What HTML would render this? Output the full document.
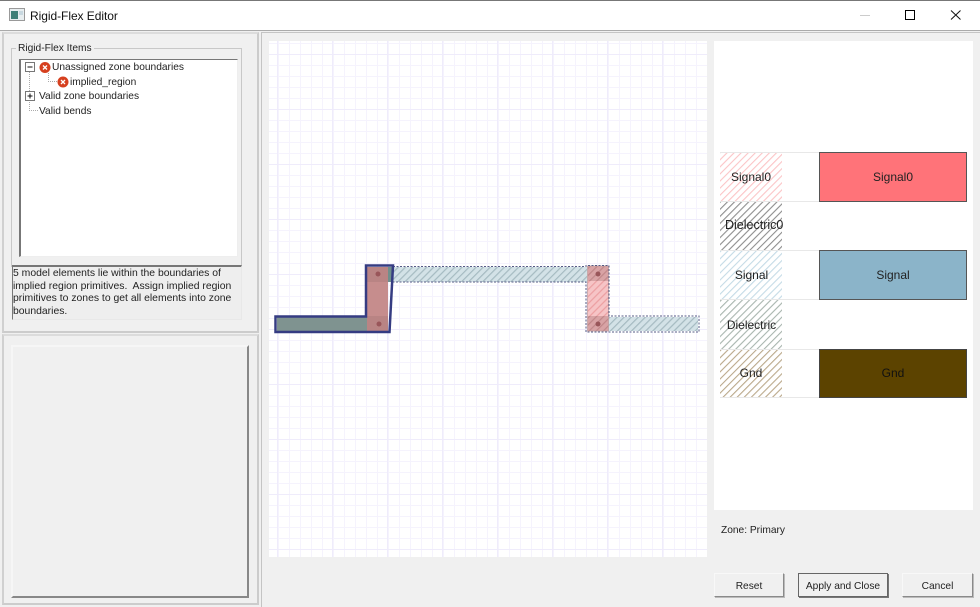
<!DOCTYPE html>
<html><head><meta charset="utf-8"><style>
html,body{margin:0;padding:0;width:980px;height:607px;overflow:hidden;background:#f0f0f0;font-family:"Liberation Sans",sans-serif;color:#222}
div{position:absolute;box-sizing:border-box}
.t{font-size:10.2px;white-space:nowrap;line-height:14px}
.l{font-size:12px;text-align:center;color:#222}
.btn{height:24px;top:573px;background:#f0f0f0;border:1px solid;border-color:#f8f8f8 #8a8a8a #8a8a8a #f8f8f8;box-shadow:1px 1px 0 #bbb;text-align:center;font-size:10.200px;line-height:25px}
</style></head><body>
<div style="left:0;top:0;width:980px;height:31px;background:#fff;border-top:1px solid #777;border-bottom:1px solid #aaa"></div>
<svg style="position:absolute;left:9px;top:8px" width="16" height="14"><rect x=".5" y=".5" width="15" height="12" fill="#e8eef0" stroke="#999"/><rect x="2" y="3" width="7" height="8" fill="#3f7f78"/><rect x="10" y="3" width="4" height="4" fill="#c8d8e0"/></svg>
<div style="left:30px;top:8px;font-size:12px;line-height:16px;color:#111;white-space:nowrap;letter-spacing:-.05px">Rigid-Flex Editor</div>
<svg style="position:absolute;left:855px;top:8px" width="125" height="16" fill="none"><path d="M5 7.500H15" stroke="#ccc"/><rect x="50.500" y="2.500" width="9" height="9" stroke="#000" stroke-width="1"/><path d="M96 2.500L105.500 11.500M105.500 2.500L96 11.500" stroke="#111" stroke-width="1"/></svg>

<!-- left panels -->
<div style="left:2px;top:32px;width:257px;height:301px;border:2px solid;border-color:#dcdcdc #cccccc #cccccc #d0d0d0"></div>
<div style="left:2px;top:334px;width:257px;height:271px;border:2px solid;border-color:#dcdcdc #cccccc #cccccc #d0d0d0"></div>
<div style="left:11px;top:48px;width:231px;height:219px;border:1px solid #c8c8c8"></div>
<div style="left:16px;top:42px;background:#f0f0f0;padding:0 2px;font-size:10.200px;line-height:14px;white-space:nowrap">Rigid-Flex Items</div>
<div style="left:19px;top:59px;width:219px;height:198px;background:#fff;border:1px solid;border-color:#777 #eee #eee #777;border-left-width:2px"></div>
<svg style="position:absolute;left:20px;top:60px" width="130" height="60" fill="none">
<path d="M9.500 12V50.500H19M28.500 13V21.500H38" stroke="#aaa" stroke-dasharray="1 1"/>
<rect x="5.500" y="2.500" width="9" height="9" fill="#fff" stroke="#777"/><path d="M7.500 7H12.500" stroke="#111"/>
<rect x="5.500" y="31.500" width="9" height="9" fill="#fff" stroke="#777"/><path d="M7.500 36H12.500M10 33.500V38.500" stroke="#111"/>
<circle cx="25" cy="7.500" r="5.500" fill="#d6401f"/><path d="M23 5.500L27 9.500M27 5.500L23 9.500" stroke="#fff" stroke-width="1.300"/>
<circle cx="43" cy="22" r="5.500" fill="#d6401f"/><path d="M41 20L45 24M45 20L41 24" stroke="#fff" stroke-width="1.300"/>
</svg>
<div class="t" style="left:52px;top:61px">Unassigned zone boundaries</div>
<div class="t" style="left:70px;top:76px">implied_region</div>
<div class="t" style="left:39px;top:90px">Valid zone boundaries</div>
<div class="t" style="left:39px;top:105px">Valid bends</div>
<div style="left:12px;top:265px;width:230px;height:55px;background:#eee;border-top:2px solid #777;border-left:1px solid #777;border-right:1px solid #e8e8e8;border-bottom:1px solid #e8e8e8"></div>
<div class="t" style="left:13px;top:268px;line-height:12.700px;font-size:10.400px">5 model elements lie within the boundaries of<br>implied region primitives.&nbsp; Assign implied region<br>primitives to zones to get all elements into zone<br>boundaries.</div>
<div style="left:11px;top:345px;width:238px;height:253px;border:2px solid;border-color:#f6f6f6 #888 #888 #f6f6f6"></div>

<!-- right area -->
<div style="left:261px;top:32px;width:719px;height:575px;border:1px solid #c4c4c4;border-right:0;border-bottom:0"></div>

<svg style="position:absolute;left:269px;top:41px" width="438" height="516">
<defs>
<pattern id="m" width="11" height="11" patternUnits="userSpaceOnUse" x="-2" y="2"><path d="M.5 0V11M0 .5H11" stroke="#f5f3fd" fill="none" stroke-width="1"/></pattern>
<pattern id="M" width="55" height="55" patternUnits="userSpaceOnUse" x="8" y="13"><path d="M.5 0V55M0 .5H55" stroke="#efecfb" fill="none"/></pattern>
<pattern id="hb" width="5" height="5" patternUnits="userSpaceOnUse" patternTransform="rotate(45)"><rect width="5" height="5" fill="#d3e2e7"/><rect width="1.200" height="5" fill="#a5bac1"/></pattern>
<pattern id="hp" width="5" height="5" patternUnits="userSpaceOnUse" patternTransform="rotate(45)"><rect width="5" height="5" fill="#f6c4c6"/><rect width="1.200" height="5" fill="#ec9fa2"/></pattern>
<pattern id="hpd" width="5" height="5" patternUnits="userSpaceOnUse" patternTransform="rotate(45)"><rect width="5" height="5" fill="#d8a3a5"/><rect width="1.200" height="5" fill="#c08789"/></pattern>
</defs>
<rect width="438" height="516" fill="#fff"/>
<rect width="438" height="516" fill="url(#m)"/>
<rect width="438" height="516" fill="url(#M)"/>
<g transform="translate(-269,-41)">
<rect x="393" y="267" width="194" height="15" fill="url(#hb)"/>
<rect x="608" y="317" width="90" height="14" fill="url(#hb)"/>
<rect x="587.500" y="266" width="21" height="65" fill="url(#hp)"/>
<rect x="587.500" y="266" width="21" height="15" fill="url(#hpd)"/>
<rect x="587.500" y="316" width="21" height="15" fill="url(#hpd)"/>
<rect x="587.500" y="266" width="21" height="65" fill="none" stroke="#b99" stroke-width=".7"/>
<circle cx="598" cy="274" r="2.500" fill="#99565a"/><circle cx="598" cy="324" r="2.500" fill="#99565a"/>
<path d="M393 266.500H586V265.500H609V316H699V332H586V282H393" fill="none" stroke="#555b85" stroke-width="1" stroke-dasharray="2 1.500"/>
<rect x="277" y="317" width="90" height="14" fill="#7f9390"/>
<rect x="367" y="267" width="21" height="64" fill="#c68d8d"/>
<rect x="367" y="267" width="21" height="15" fill="#b98484"/>
<rect x="367" y="316" width="21" height="15" fill="#b98484"/>
<rect x="388" y="267" width="5" height="15" fill="#6f8f8c"/>
<circle cx="378" cy="274" r="2.500" fill="#99565a"/><circle cx="379" cy="324" r="2.500" fill="#99565a"/>
<path d="M275.500 316.500H366V265.500H393L389.500 332H275.500Z" fill="none" stroke="#353c82" stroke-width="2.500"/>
</g>
</svg>

<div style="left:714px;top:41px;width:259px;height:469px;background:#fff"></div>
<svg style="position:absolute;left:720px;top:152px" width="62" height="246">
<defs>
<pattern id="a" width="5" height="5" patternUnits="userSpaceOnUse" patternTransform="rotate(45)"><rect width="1.100" height="5" fill="#fbc4c6"/></pattern>
<pattern id="b" width="5" height="5" patternUnits="userSpaceOnUse" patternTransform="rotate(45)"><rect width="1.100" height="5" fill="#8d8d8d"/></pattern>
<pattern id="c" width="5" height="5" patternUnits="userSpaceOnUse" patternTransform="rotate(45)"><rect width="1.100" height="5" fill="#c4dbe6"/></pattern>
<pattern id="d" width="5" height="5" patternUnits="userSpaceOnUse" patternTransform="rotate(45)"><rect width="1.100" height="5" fill="#a8b5ae"/></pattern>
<pattern id="e" width="5" height="5" patternUnits="userSpaceOnUse" patternTransform="rotate(45)"><rect width="1.100" height="5" fill="#baa88a"/></pattern>
</defs>
<rect width="62" height="49" fill="url(#a)"/><rect y="49" width="62" height="49" fill="url(#b)"/><rect y="98" width="62" height="49" fill="url(#c)"/><rect y="147" width="62" height="50" fill="url(#d)"/><rect y="197" width="62" height="49" fill="url(#e)"/>
</svg>
<div style="left:720px;top:152px;width:247px;height:1px;background:#e8e8e8"></div>
<div style="left:720px;top:201px;width:247px;height:1px;background:#e8e8e8"></div>
<div style="left:720px;top:250px;width:247px;height:1px;background:#e8e8e8"></div>
<div style="left:720px;top:299px;width:247px;height:1px;background:#e8e8e8"></div>
<div style="left:720px;top:349px;width:247px;height:1px;background:#e8e8e8"></div>
<div style="left:720px;top:397px;width:247px;height:1px;background:#e8e8e8"></div>
<div style="left:819px;top:152px;width:148px;height:50px;background:#ff7379;border:1px solid #555"></div>
<div style="left:819px;top:250px;width:148px;height:50px;background:#8bb4c9;border:1px solid #555"></div>
<div style="left:819px;top:349px;width:148px;height:49px;background:#5c4300;border:1px solid #444"></div>
<div class="t l" style="left:720px;top:170px;width:62px">Signal0</div>
<div class="t l" style="left:720px;top:218px;width:62px;font-size:12.500px;padding-left:5px">Dielectric0</div>
<div class="t l" style="left:720px;top:268px;width:62px;padding-left:1px">Signal</div>
<div class="t l" style="left:720px;top:318px;width:62px;padding-left:1px">Dielectric</div>
<div class="t l" style="left:720px;top:366px;width:62px">Gnd</div>
<div class="t l" style="left:819px;top:170px;width:148px">Signal0</div>
<div class="t l" style="left:819px;top:268px;width:148px">Signal</div>
<div class="t l" style="left:819px;top:366px;width:148px;color:#111">Gnd</div>
<div class="t" style="left:721px;top:524px">Zone: Primary</div>
<div class="btn" style="left:714px;width:70px">Reset</div>
<div class="btn" style="left:798px;width:90px;border:1px solid #666;box-shadow:1px 1px 0 #777">Apply and Close</div>
<div class="btn" style="left:902px;width:71px">Cancel</div>
</body></html>
